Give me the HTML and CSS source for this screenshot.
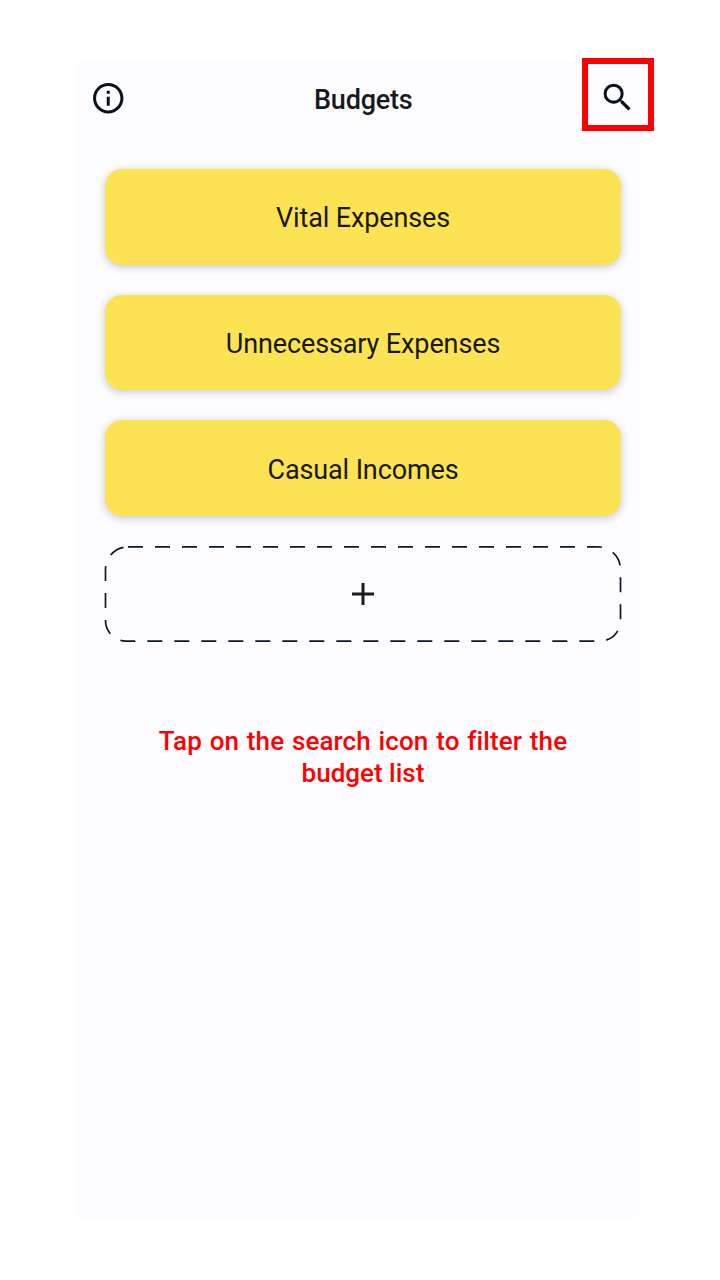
FILE: index.html
```html
<!DOCTYPE html>
<html lang="en">
<head>
<meta charset="utf-8">
<title>Budgets</title>
<link rel="stylesheet" href="styles.css">
</head>
<body>
<main class="screen">
  <header class="bar">
    <svg class="icon info" viewBox="0 0 24 24"><path d="M11 7h2v2h-2zm0 4h2v6h-2zm1-9C6.48 2 2 6.48 2 12s4.48 10 10 10 10-4.48 10-10S17.52 2 12 2zm0 18c-4.41 0-8-3.59-8-8s3.59-8 8-8 8 3.59 8 8-3.59 8-8 8z"/></svg>
    <h1 class="title">Budgets</h1>
    <div class="highlight">
      <svg class="icon glass" viewBox="0 0 24 24"><path d="M15.5 14h-.79l-.28-.27A6.471 6.471 0 0 0 16 9.500 6.500 6.500 0 1 0 9.500 16c1.610 0 3.090-.590 4.230-1.570l.27.28v.79l5 4.990L20.490 19l-4.990-5zm-6 0C7.010 14 5 11.990 5 9.500S7.010 5 9.500 5 14 7.010 14 9.500 11.990 14 9.500 14z"/></svg>
    </div>
  </header>
  <section class="list">
    <div class="card">Vital Expenses</div>
    <div class="card">Unnecessary Expenses</div>
    <div class="card">Casual Incomes</div>
    <svg class="add" viewBox="0 0 516 96">
      <path class="dash" d="M23 .9H493A22.500 22.500 0 0 1 515.500 23.400V74.600A20.500 20.500 0 0 1 495 95.100H21A20.500 20.500 0 0 1 .5 74.600V23.400A22.500 22.500 0 0 1 23 .9"/>
      <path class="plus" d="M247 48H269M258 37V59"/>
    </svg>
  </section>
  <p class="hint"><span class="line first">Tap on the search icon to filter the</span><span class="line">budget list</span></p>
</main>
</body>
</html>
```
FILE: styles.css
```css
* { box-sizing: border-box; }
body { margin: 0; background: #fff; font-family: Roboto, "Liberation Sans", sans-serif; color: #17191d; }
.screen { width: 564px; height: 1158px; margin: 60px 0 0 75px; background: #fdfdff; }
.bar { display: flex; align-items: flex-start; justify-content: space-between; width: 579px; height: 108.8px; padding-left: 15px; }
.icon { display: block; width: 37px; height: 37px; fill: #071420; }
.info { width: 36.5px; height: 36.5px; margin-top: 20px; }
.title { margin: 24px 0 0 18px; font-size: 27px; line-height: 32px; font-weight: 500; letter-spacing: -.2px; }
.highlight { width: 72px; height: 73px; margin-top: -2px; border: 6px solid #f00; padding: 15px 0 0 11px; }
.list { display: flex; flex-direction: column; gap: 30px; width: 516px; margin-left: 30px; }
.card { display: flex; align-items: center; justify-content: center; height: 95.8px; padding-top: 2px; border-radius: 17px; background: #fce354; box-shadow: 0 2px 8px rgba(20, 20, 50, .24); font-size: 27px; letter-spacing: -.12px; color: #17170c; }
.card + .card { padding-top: 3.2px; }
.add { display: block; width: 516px; height: 96px; fill: none; overflow: visible; }
.dash { stroke: #0b1728; stroke-width: 1.7; stroke-dasharray: 15 12; }
.plus { stroke: #1b1b1d; stroke-width: 3; }
.hint { display: flex; flex-direction: column; align-items: center; width: 516px; margin: 83px 0 0 30px; font-size: 26px; line-height: 32px; font-weight: 500; color: #f00; }
.line { white-space: nowrap; }
.first { letter-spacing: .1px; word-spacing: 1.2px; }
```
